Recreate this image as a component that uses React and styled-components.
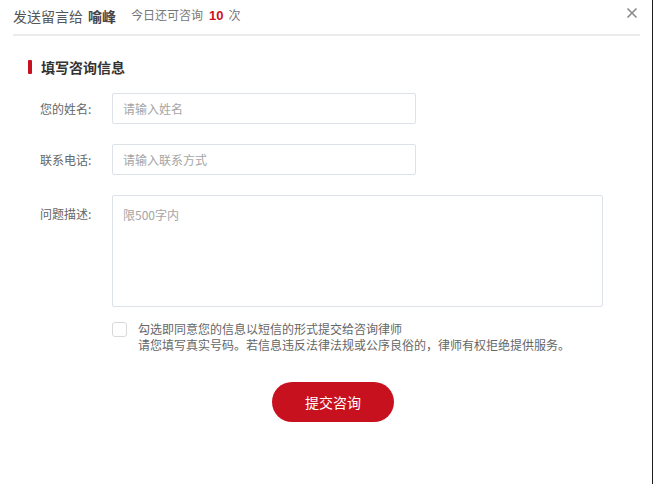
import React from 'react'
import styled, { createGlobalStyle } from 'styled-components'

const GlobalStyle = createGlobalStyle`
    html, body {
        margin: 0;
        padding: 0;
        background: #fff;
    }
    body {
        font-family: "Noto Sans CJK SC", "Noto Sans", sans-serif;
    }
    * {
        box-sizing: border-box;
    }
`

const Dialog = styled.div`
    width: 653px;
    height: 484px;
    background: #fff;
    border-right: 1px solid #1c1c1c;
    overflow: hidden;
`

const Header = styled.header`
    display: flex;
    align-items: center;
    height: 36px;
    margin: 0 12px 0 13px;
    border-bottom: 2px solid #ebebeb;
    padding-bottom: 3px;
`

const Sender = styled.span`
    font-size: 14px;
    color: #555;
    line-height: 20px;
`

const Lawyer = styled.b`
    margin-left: 5px;
    color: #444;
    font-weight: 700;
`

const Quota = styled.span`
    margin-left: 15px;
    font-size: 12px;
    color: #777;
    line-height: 20px;
`

const Count = styled.b`
    margin: 0 5px 0 6px;
    font-size: 13px;
    color: #d0111b;
    font-family: "Liberation Sans", Arial, sans-serif;
`

const Close = styled.button`
    margin-left: auto;
    margin-right: 2px;
    margin-top: -6px;
    width: 12px;
    height: 12px;
    padding: 0;
    border: 0;
    background: none;
    cursor: pointer;
    display: flex;
`

const Body = styled.div`
    padding: 21px 0 0 28px;
`

const SectionTitle = styled.h2`
    display: flex;
    align-items: center;
    gap: 9px;
    margin: 0;
    font-size: 14px;
    font-weight: 700;
    line-height: 20px;
    color: #333;

    &::before {
        content: '';
        width: 4px;
        height: 14px;
        border-radius: 1px;
        background: #c8111f;
    }
`

const Form = styled.form`
    display: flex;
    flex-direction: column;
    gap: 20px;
    margin-top: 16px;
    padding-left: 12px;
`

const Row = styled.div`
    display: flex;
    align-items: flex-start;
`

const Label = styled.label`
    width: 72px;
    flex-shrink: 0;
    font-size: 12px;
    color: #666;
    line-height: 31px;
    padding-top: ${p => (p.$top ? '3px' : '0')};
`

const Input = styled.input`
    width: 304px;
    height: 31px;
    padding: 0 10px;
    border: 1px solid #dde1e8;
    border-radius: 2px;
    font: inherit;
    font-size: 12px;
    color: #333;
    outline: none;

    &::placeholder {
        color: #a5a5a5;
    }
`

const TextArea = styled.textarea`
    width: 491px;
    height: 112px;
    padding: 10px 10px;
    border: 1px solid #dde1e8;
    border-radius: 2px;
    font: inherit;
    font-size: 12px;
    line-height: 18px;
    color: #333;
    resize: none;
    outline: none;

    &::placeholder {
        color: #a5a5a5;
    }
`

const Agreement = styled.div`
    display: flex;
    align-items: flex-start;
    gap: 11px;
    margin: -6px 0 0 72px;
`

const Check = styled.span`
    width: 15px;
    height: 15px;
    margin-top: 1px;
    flex-shrink: 0;
    border: 1px solid #d9d9d9;
    border-radius: 3px;
    background: #fff;
`

const Notice = styled.p`
    margin: 0;
    font-size: 12px;
    line-height: 16px;
    color: #666;
`

const Actions = styled.div`
    padding: 29px 0 0 244px;
`

const Submit = styled.button`
    width: 122px;
    height: 40px;
    border: 0;
    border-radius: 20px;
    background: #c8111f;
    color: #fff;
    font: inherit;
    font-size: 14px;
    cursor: pointer;
`

function CloseIcon() {
    return (
        <svg width="12" height="12" viewBox="0 0 12 12">
            <path d="M1.5 1.5 L10.5 10.5 M10.5 1.5 L1.5 10.5" stroke="#8a8a8a" strokeWidth="1.6" fill="none" />
        </svg>
    )
}

export default function App() {
    return (
        <Dialog>
            <GlobalStyle />
            <Header>
                <Sender>
                    发送留言给<Lawyer>喻峰</Lawyer>
                </Sender>
                <Quota>
                    今日还可咨询<Count>10</Count>次
                </Quota>
                <Close type="button" aria-label="关闭">
                    <CloseIcon />
                </Close>
            </Header>
            <Body>
                <SectionTitle>填写咨询信息</SectionTitle>
                <Form>
                    <Row>
                        <Label>您的姓名:</Label>
                        <Input placeholder="请输入姓名" />
                    </Row>
                    <Row>
                        <Label>联系电话:</Label>
                        <Input placeholder="请输入联系方式" />
                    </Row>
                    <Row>
                        <Label $top>问题描述:</Label>
                        <TextArea placeholder="限500字内" />
                    </Row>
                    <Agreement>
                        <Check />
                        <Notice>
                            勾选即同意您的信息以短信的形式提交给咨询律师
                            <br />
                            请您填写真实号码。若信息违反法律法规或公序良俗的，律师有权拒绝提供服务。
                        </Notice>
                    </Agreement>
                </Form>
                <Actions>
                    <Submit type="button">提交咨询</Submit>
                </Actions>
            </Body>
        </Dialog>
    )
}
